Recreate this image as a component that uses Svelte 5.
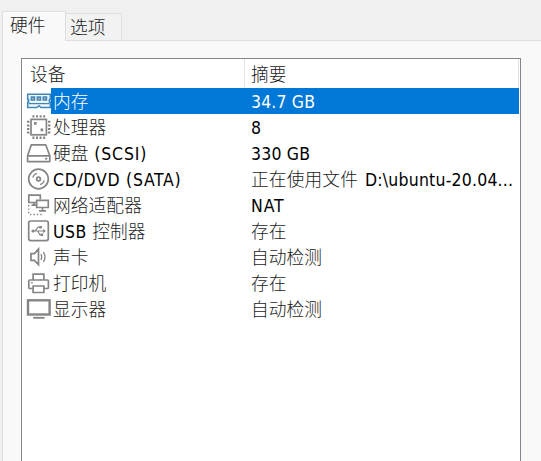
<script>
  // Each text run is [text, isLatin, letterSpacing].
  const devices = [
    { icon: 'memory', name: [['内存', 0]], summary: [['34.7 GB', 1, 0.15]], selected: true },
    { icon: 'cpu', name: [['处理器', 0]], summary: [['8', 1]] },
    { icon: 'disk', name: [['硬盘', 0], [' (SCSI)', 1, 0.85]], summary: [['330 GB', 1, 0.2]] },
    { icon: 'cd', name: [['CD/DVD (SATA)', 1, 0.7]], summary: [['正在使用文件', 0, 0.15], [' ', 1, 2], ['D:\\ubuntu-20.04...', 1, 0.2]] },
    { icon: 'network', name: [['网络适配器', 0, 0.1]], summary: [['NAT', 1, 0.9]] },
    { icon: 'usb', name: [['USB ', 1, 0.5], ['控制器', 0]], summary: [['存在', 0]] },
    { icon: 'sound', name: [['声卡', 0]], summary: [['自动检测', 0, 0.1]] },
    { icon: 'printer', name: [['打印机', 0]], summary: [['存在', 0]] },
    { icon: 'display', name: [['显示器', 0]], summary: [['自动检测', 0, 0.1]] }
  ];
</script>

{#snippet runs(parts)}
  {#each parts as [text, latin, spacing]}<span class:latin={latin} style:letter-spacing={`${spacing ?? 0}px`}>{text}</span>{/each}
{/snippet}

<div class="dialog">
  <div class="tabs">
    <div class="tab active">硬件</div>
    <div class="tab">选项</div>
    <div class="rest"></div>
  </div>
  <div class="panel">
    <div class="list">
      <div class="head">
        <div class="h1">设备</div>
        <div class="h2">摘要</div>
      </div>
      {#each devices as d}
        <div class="row" class:selected={d.selected}>
          <svg viewBox="-1 0 26 26" fill="none" stroke="#858585" stroke-width="1.7">
            {#if d.icon === 'memory'}
              <g stroke="#3f86b8">
                <path d="M1.7 6.2H24.3V11.5H23.4V14H24.3V19.6H15L13 17.8L11 19.6H1.7V14H2.6V11.5H1.7Z" fill="#f2f7fa" stroke-width="1.5" />
                <path d="M2.5 15.6H23.4" stroke-width="1.3" />
                <path d="M5.2 9h3.4v3.2H5.2zM11.2 9h3.4v3.2h-3.4zM17.2 9h3.4v3.2h-3.4z" fill="#a0a8ad" stroke-width="1.3" />
              </g>
            {:else if d.icon === 'cpu'}
              <rect x="5" y="5.4" width="15.4" height="15.4" />
              <path d="M6.4 2.4H19.3M6.4 23.7H19.3" stroke-width="2.4" stroke-dasharray="2 1.6" />
              <path d="M2.2 6.8V19.8M23.2 6.8V19.8" stroke-width="2.4" stroke-dasharray="2 1.6" />
              <path d="M8 8.1h2.6v2.6H8zM14.6 14.6h2.6v2.6h-2.6z" fill="#858585" stroke="none" />
            {:else if d.icon === 'disk'}
              <path d="M5.3 4.8H19.7L23.8 15.8V21.6H1.6V15.8Z M1.6 15.8H23.8" stroke-linejoin="round" />
              <path d="M19 18.7h2.3" />
            {:else if d.icon === 'cd'}
              <circle cx="12.5" cy="13" r="9.8" />
              <circle cx="12.5" cy="13" r="1.9" />
              <path d="M6.8 11.6A6 6 0 0 1 11 7.3M18.2 14.4A6 6 0 0 1 14 18.7" stroke-width="1.3" />
            {:else if d.icon === 'network'}
              <path d="M10.5 10.5H2.8V3.2H14.3V7.5M5.5 13.2H10M8 10.5V13" />
              <path d="M10.7 8.3H22.3V15.5H10.7ZM16.5 15.5V18.5M13 18.8H20" />
              <path d="M2.7 13V22.5M4 22.5H17" stroke-width="1.4" stroke-dasharray="1.4 2" />
            {:else if d.icon === 'usb'}
              <rect x="2.7" y="3" width="19.6" height="19.6" rx="2" />
              <path d="M7 13H18M9 13L12 9.2H14M11.5 13L14 16.8H16" stroke-width="1.2" />
              <circle cx="7" cy="13" r="1.6" fill="#858585" stroke="none" />
              <path d="M17.2 10.8L19.8 13L17.2 15.2ZM13.3 7.9h2.6v2.6h-2.6zM14.6 15.5h2.6v2.6h-2.6z" fill="#858585" stroke="none" />
            {:else if d.icon === 'sound'}
              <path d="M5 9.6H8.4L12.5 5V20.6L8.4 16.4H5Z" />
              <path d="M14.8 10.2Q16.6 13 14.8 15.8M17.4 8.2Q20.6 13 17.4 17.8" stroke-width="1.3" />
            {:else if d.icon === 'printer'}
              <path d="M7.1 10V4.2H17.9V10M7.1 18.5H3.8Q2.8 18.5 2.8 17.5V11Q2.8 10 3.8 10H21.4Q22.4 10 22.4 11V17.5Q22.4 18.5 21.4 18.5H17.9" />
              <path d="M7.1 16H17.9V22.5H7.1Z" />
              <path d="M5 12.6h1.8" stroke-width="1.2" />
            {:else}
              <rect x="2" y="4.3" width="21.6" height="14.2" stroke-width="2.4" />
              <path d="M7.2 21.8H18.6" stroke-width="1.9" />
            {/if}
          </svg>
          <div class="name">{@render runs(d.name)}</div>
          <div class="summary">{@render runs(d.summary)}</div>
        </div>
      {/each}
    </div>
  </div>
</div>

<style>
  .dialog {
    width: 541px;
    height: 461px;
    box-sizing: border-box;
    padding: 11px 0 0 2px;
    overflow: hidden;
    display: flex;
    flex-direction: column;
    background: #f0f0f0;
    color: #1a1a1a;
    font: 300 17.7px/24px "Noto Sans CJK SC", sans-serif;
  }
  .tabs {
    display: flex;
    height: 30px;
    align-items: flex-end;
  }
  .tab {
    box-sizing: border-box;
    width: 56px;
    height: 28px;
    padding: 0 0 0 4px;
    border: 1px solid #dfdfdf;
    border-left: 0;
    background: #f2f2f2;
  }
  .tab.active {
    width: 64px;
    height: 30px;
    padding: 0 0 0 7px;
    border-left: 1px solid #dfdfdf;
    border-bottom: 0;
    background: #f9f9f9;
  }
  .rest {
    flex: 1;
    border-bottom: 1px solid #dfdfdf;
  }
  .panel {
    flex: 1;
    padding: 17px 20px 0 18px;
    border-left: 1px solid #dfdfdf;
    background: #f9f9f9;
  }
  .list {
    height: 420px;
    box-sizing: border-box;
    border: 1px solid #828790;
    padding-right: 1px;
    background: #fff;
  }
  .head {
    display: flex;
    height: 29px;
    line-height: 29px;
  }
  .h1 {
    width: 214px;
    padding-left: 8px;
    border-right: 1px solid #e2e2e2;
  }
  .h2 {
    flex: 1;
    padding-left: 6px;
    border-right: 1px solid #e2e2e2;
  }
  .row {
    display: flex;
    height: 26px;
    padding-left: 3px;
  }
  svg {
    flex: none;
    width: 26px;
    height: 26px;
  }
  .name {
    width: 197px;
    box-sizing: border-box;
    padding-left: 2px;
  }
  .summary {
    flex: 1;
    padding-left: 3px;
  }
  .selected .name,
  .selected .summary {
    background: #0078d7;
    color: #fff;
  }
  span {
    white-space: pre;
  }
  .latin {
    color: #000;
    font: 400 17.5px/24px "DejaVu Sans Condensed", "DejaVu Sans", sans-serif;
    font-stretch: condensed;
  }
  .selected .latin {
    color: #fff;
  }
</style>
